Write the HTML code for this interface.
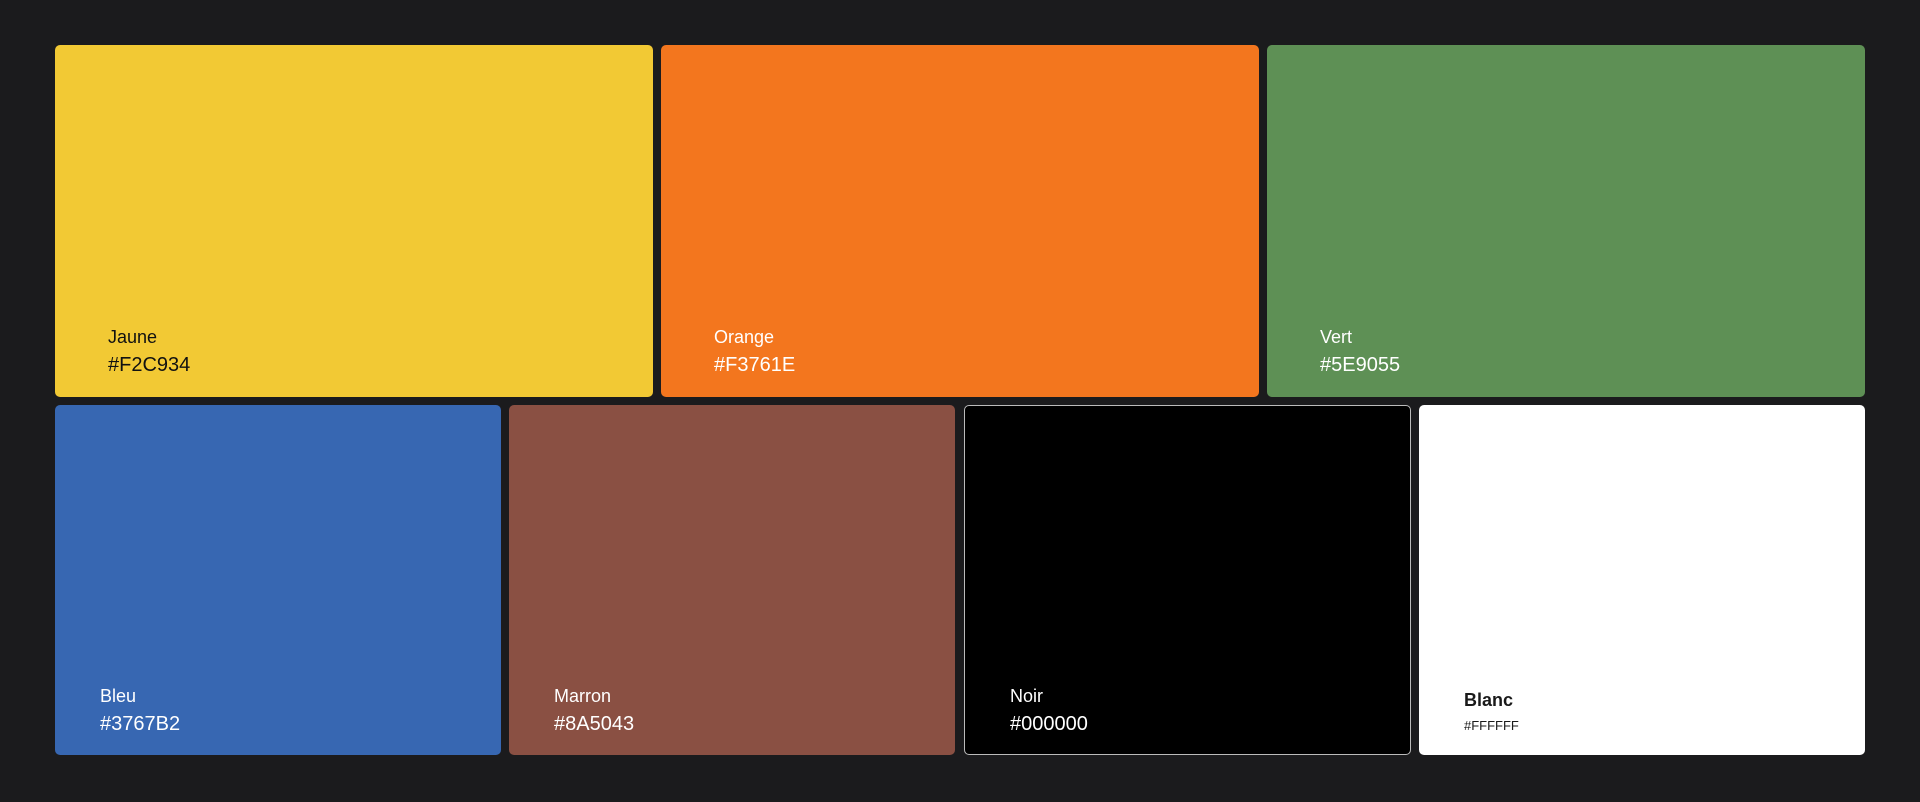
<!DOCTYPE html>
<html><head><style>
html,body{margin:0;padding:0;background:#1b1b1d;width:1920px;height:802px;overflow:hidden;font-family:"Liberation Sans",sans-serif}
.c{position:absolute;border-radius:5px;box-sizing:border-box}
.l{position:absolute;font-size:18px;line-height:1}
.h{position:absolute;font-size:20px;line-height:1}
</style></head><body>
<div class="c" style="left:55px;top:45px;width:598px;height:352px;background:#F2C934;color:#111">
<div class="l" style="left:53px;top:283px">Jaune</div><div class="h" style="left:53px;top:310px">#F2C934</div></div>
<div class="c" style="left:661px;top:45px;width:598px;height:352px;background:#F3761E;color:#fff">
<div class="l" style="left:53px;top:283px">Orange</div><div class="h" style="left:53px;top:310px">#F3761E</div></div>
<div class="c" style="left:1267px;top:45px;width:598px;height:352px;background:#5E9055;color:#fff">
<div class="l" style="left:53px;top:283px">Vert</div><div class="h" style="left:53px;top:310px">#5E9055</div></div>

<div class="c" style="left:55px;top:405px;width:446px;height:350px;background:#3767B2;color:#fff">
<div class="l" style="left:45px;top:282px">Bleu</div><div class="h" style="left:45px;top:309px">#3767B2</div></div>
<div class="c" style="left:509px;top:405px;width:446px;height:350px;background:#8A5043;color:#fff">
<div class="l" style="left:45px;top:282px">Marron</div><div class="h" style="left:45px;top:309px">#8A5043</div></div>
<div class="c" style="left:964px;top:405px;width:447px;height:350px;background:#000;border:1px solid #bbb;color:#fff">
<div class="l" style="left:45px;top:281px">Noir</div><div class="h" style="left:45px;top:308px">#000000</div></div>
<div class="c" style="left:1419px;top:405px;width:446px;height:350px;background:#fff;color:#1a1a1a">
<div class="l" style="left:45px;top:286px;font-weight:bold;font-size:18px">Blanc</div><div class="h" style="left:45px;top:314px;font-size:13px">#FFFFFF</div></div>
</body></html>
